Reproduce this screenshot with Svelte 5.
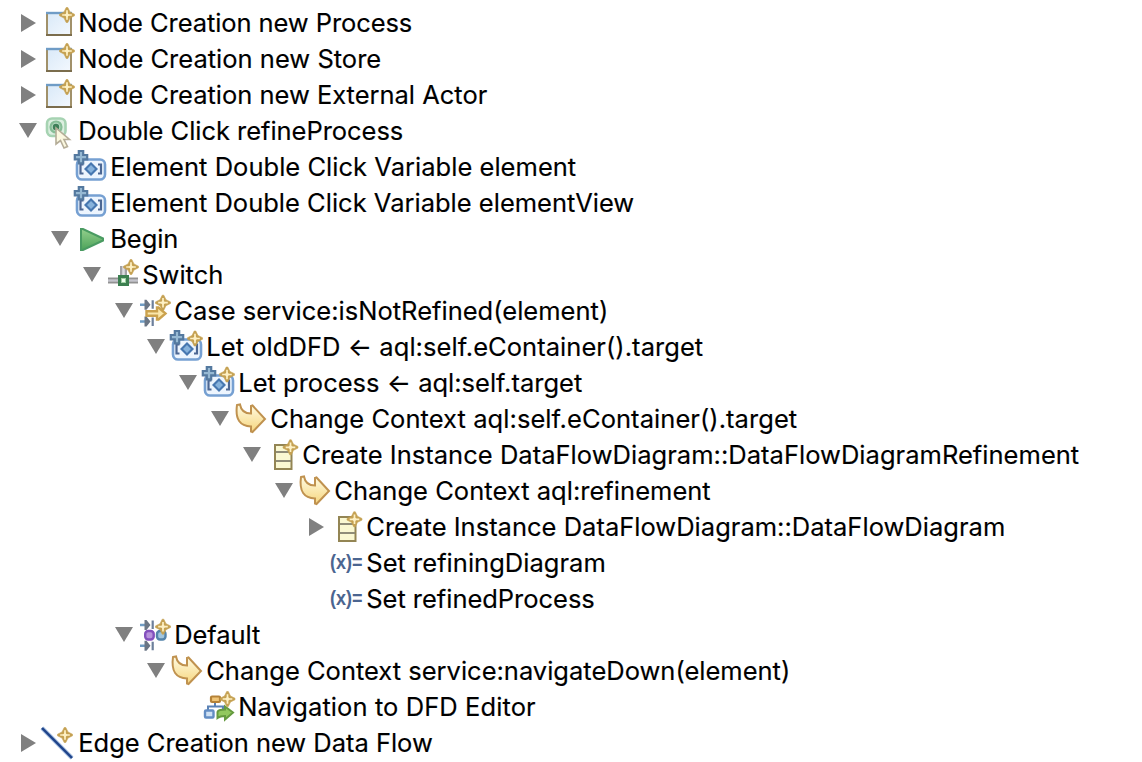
<script>
  const rows = [
    { level: 0, open: false, icon: 'node', label: 'Node Creation new Process', width: 334 },
    { level: 0, open: false, icon: 'node', label: 'Node Creation new Store', width: 303 },
    { level: 0, open: false, icon: 'node', label: 'Node Creation new External Actor', width: 409 },
    { level: 0, open: true, icon: 'click', label: 'Double Click refineProcess', width: 325 },
    { level: 1, icon: 'variable', label: 'Element Double Click Variable element', width: 466 },
    { level: 1, icon: 'variable', label: 'Element Double Click Variable elementView', width: 524 },
    { level: 1, open: true, icon: 'begin', label: 'Begin', width: 68 },
    { level: 2, open: true, icon: 'switch', label: 'Switch', width: 81 },
    { level: 3, open: true, icon: 'case', label: 'Case service:isNotRefined(element)', width: 434 },
    { level: 4, open: true, icon: 'let', label: 'Let oldDFD ← aql:self.eContainer().target', width: 497 },
    { level: 5, open: true, icon: 'let', label: 'Let process ← aql:self.target', width: 344 },
    { level: 6, open: true, icon: 'context', label: 'Change Context aql:self.eContainer().target', width: 527 },
    { level: 7, open: true, icon: 'instance', label: 'Create Instance DataFlowDiagram::DataFlowDiagramRefinement', width: 777 },
    { level: 8, open: true, icon: 'context', label: 'Change Context aql:refinement', width: 376.5 },
    { level: 9, open: false, icon: 'instance', label: 'Create Instance DataFlowDiagram::DataFlowDiagram', width: 639 },
    { level: 9, icon: 'set', label: 'Set refiningDiagram', width: 239.5 },
    { level: 9, icon: 'set', label: 'Set refinedProcess', width: 228.5 },
    { level: 3, open: true, icon: 'default', label: 'Default', width: 86 },
    { level: 4, open: true, icon: 'context', label: 'Change Context service:navigateDown(element)', width: 584 },
    { level: 5, icon: 'navigation', label: 'Navigation to DFD Editor', width: 297.5 },
    { level: 0, open: false, icon: 'edge', label: 'Edge Creation new Data Flow', width: 354.5 },
  ];

  function fit(el, width) {
    const natural = el.getBoundingClientRect().width;
    el.style.letterSpacing = `${(width - natural) / el.textContent.length}px`;
  }
</script>

{#snippet spark(x, y)}
  <g transform="translate({x} {y})">
    <path d="M-.8-7.500H.8L3-3 7.500-.8V.8L3 3 .8 7.500H-.8L-3 3-7.500.8V-.8L-3-3Z" fill="#c5a152" stroke="#c5a152" stroke-width=".6" stroke-linejoin="round" />
    <path d="M0-4.800V4.800M-4.800 0H4.800" stroke="#fdf0c4" stroke-width="1.700" fill="none" />
    <path d="M0-2.400 2.400 0 0 2.400-2.400 0Z" fill="#fdf0c4" />
  </g>
{/snippet}

{#snippet variable(top)}
  <rect x="3" y={top} width="28" height={28.5 - top} rx="5" fill="#edf5fe" stroke="#76a0d2" stroke-width="2.6" />
  <path d="M9.500 13.500H6.500V22.500H9.500M24 13.500H27V22.500H24" fill="none" stroke="#4c6793" stroke-width="2.200" />
  <path d="M17 11 24 18 17 25 10 18Z" fill="#4677b0" />
  <path d="M17 14 21 18 17 22 13 18Z" fill="#86b2dc" />
  <path d="M4.800 0H9.200V4H13.200V8.400H9.200V12.400H4.800V8.400H.8V4H4.800Z" fill="#96b9d3" stroke="#54799f" stroke-width="2.200" />
{/snippet}

{#snippet inlets(a, b)}
  <g fill="none">
    <path d="M2 {a}H8M2 {b}H8" stroke="#6f9cc4" stroke-width="2.400" />
    <path d="M14.700 {a - 4.500}V{a + 4}M14.700 {b - 4}V{b + 4.500}" stroke="#6c7f9b" stroke-width="2.200" />
  </g>
  <path d="M6.500 {a - 5}H8.500L12.500 {a} 8.500 {a + 5}H6.500ZM6.500 {b - 5}H8.500L12.500 {b} 8.500 {b + 5}H6.500Z" fill="#6b7685" />
{/snippet}

<main>
  {#each rows as row}
    <div class="row" style:--level={row.level}>
      <span class="toggle">
        {#if row.open === true}
          <svg width="18" height="15" viewBox="0 0 18 15"><path d="M0 0H18L9 15Z" fill="#808080" /></svg>
        {:else if row.open === false}
          <svg width="15" height="18" viewBox="0 0 15 18"><path d="M0 0 15 9 0 18Z" fill="#808080" /></svg>
        {/if}
      </span>
      <svg class="icon" viewBox="0 0 32 32">
        {#if row.icon === 'node'}
          <rect x="5" y="6" width="24" height="22" fill="url(#sheet)" stroke="#a1916a" stroke-width="2" />
          <path d="M4 6H30" stroke="#6f9cc6" stroke-width="2.400" />
          <path d="M4 28H30" stroke="#7b6d4d" stroke-width="2" />
          {@render spark(25, 8)}
        {:else if row.icon === 'click'}
          <rect x="5" y="3.500" width="18.500" height="17.500" rx="5" fill="#dcefe0" stroke="#a6d3b2" stroke-width="2.600" />
          <circle cx="14" cy="12" r="5.500" fill="#b4d8bf" stroke="#86bd96" stroke-width="2.200" />
          <circle cx="14" cy="12" r="3.200" fill="#3f7f58" />
          <path d="M14 13V29L18.500 25.500 22 33 25.500 31.500 22 24.500H27.500Z" fill="#fbf8e0" stroke="#b5ad98" stroke-width="1.600" />
        {:else if row.icon === 'variable'}
          {@render variable(8.5)}
        {:else if row.icon === 'let'}
          {@render variable(8.5)}
          {@render spark(25, 7.5)}
        {:else if row.icon === 'begin'}
          <path d="M7 6H9L29 15.500V17.500L9 27H7Z" fill="url(#play)" stroke="#4a9b62" stroke-width="2" />
        {:else if row.icon === 'switch'}
          <path d="M17.500 7V20" stroke="#a2a2a6" stroke-width="7" />
          <path d="M17.500 7V20" stroke="#dcdce2" stroke-width="2.500" />
          <path d="M2 21.500H32" stroke="#929292" stroke-width="6" />
          <path d="M2 21.500H32" stroke="#c4c4cc" stroke-width="2.400" />
          <rect x="13.500" y="17.500" width="8" height="8" fill="#9fd0a4" stroke="#3b7f50" stroke-width="3" />
          <rect x="16" y="20" width="3" height="3" fill="#f0fff0" />
          {@render spark(25, 8)}
        {:else if row.icon === 'case'}
          {@render inlets(9.7, 26.5)}
          <path d="M8.500 16.300H19V12.500H20.500L27.500 18.500 20.500 24.500H19V20.700H8.500Z" fill="#fbe8ac" stroke="#cba24e" stroke-width="2.400" />
          {@render spark(25, 7.7)}
        {:else if row.icon === 'default'}
          {@render inlets(6, 26.7)}
          <rect x="7.200" y="12" width="8.500" height="8.500" rx="3" fill="#b892dc" stroke="#8450bd" stroke-width="2.400" />
          <rect x="19" y="12" width="8.500" height="8.500" rx="3" fill="#a2c6de" stroke="#5484ab" stroke-width="2.400" />
          {@render spark(25, 7.7)}
        {:else if row.icon === 'context'}
          <path d="M3 2 6 1.500C7 7.500 10.500 10.500 17 10.500V3L18.500 2.500 31 16 18.500 29 17 28.500V23.500C6 23 1 16.500 3 2Z" fill="url(#gold)" stroke="#c0924f" stroke-width="2" />
        {:else if row.icon === 'instance'}
          <rect x="9" y="6" width="16.500" height="24" fill="#faf8d2" stroke="#938554" stroke-width="2" />
          <path d="M10 13H25M10 22H25" stroke="#8f8c78" stroke-width="2" />
          {@render spark(24.5, 8.3)}
        {:else if row.icon === 'set'}
          <text x="0" y="22" textLength="32.500" lengthAdjust="spacingAndGlyphs" class="assign">(x)=</text>
        {:else if row.icon === 'navigation'}
          <path d="M13 11V15M6 20V15.500H21V18" fill="none" stroke="#5b82b5" stroke-width="2" />
          <rect x="9" y="5.500" width="9" height="5.500" rx="1" fill="#f0c576" stroke="#b58238" stroke-width="2.200" />
          <rect x="3" y="19.500" width="8.500" height="7" rx="1" fill="#cfe1f4" stroke="#638dc3" stroke-width="2.400" />
          <path d="M15.500 27V21C16 19 18 18.500 23 18.500V15.500L31 21.500 23 28.500V25C19 25 18 25 15.500 27Z" fill="#92c85e" stroke="#659a3f" stroke-width="2" />
          {@render spark(25.5, 8)}
        {:else if row.icon === 'edge'}
          <path d="M0 1 30 31" stroke="#9db8dc" stroke-width="4" />
          <path d="M0 1 30 31" stroke="#1f4389" stroke-width="2.400" />
          {@render spark(23, 8)}
        {/if}
      </svg>
      <span class="label"><span use:fit={row.width}>{row.label}</span></span>
    </div>
  {/each}
  <svg width="0" height="0" class="defs">
    <defs>
      <linearGradient id="sheet" x2="1" y2="1"><stop stop-color="#d9e9f8" /><stop offset="1" stop-color="#f3f8fe" /></linearGradient>
      <linearGradient id="play" x2="0" y2="1"><stop stop-color="#93cf8c" /><stop offset="1" stop-color="#4da35a" /></linearGradient>
      <linearGradient id="gold" x2="0" y2="1"><stop stop-color="#fffbe3" /><stop offset="1" stop-color="#f6d67e" /></linearGradient>
    </defs>
  </svg>
</main>

<style>
  :global(body) {
    margin: 0;
    background: #fff;
    overflow: hidden;
  }
  main {
    height: 757px;
    padding-top: 5px;
    overflow: hidden;
    font-family: Inter, sans-serif;
    font-size: 25.5px;
    color: #000;
    -webkit-text-stroke: 0.15px #000;
  }
  .row {
    display: flex;
    align-items: center;
    height: 36px;
    padding-left: calc(19px + var(--level) * 32px);
  }
  .toggle {
    display: flex;
    justify-content: center;
    width: 18px;
    margin: 0 5px 1px 0;
  }
  .icon {
    flex: none;
    width: 32px;
    height: 32px;
    overflow: visible;
  }
  .label {
    margin-left: 4.25px;
    line-height: 36px;
    white-space: pre;
  }
  .assign {
    font-family: 'Liberation Sans', sans-serif;
    font-size: 21px;
    font-weight: 700;
    fill: #4b6590;
    -webkit-text-stroke: 0;
  }
  .defs {
    display: block;
  }
</style>
